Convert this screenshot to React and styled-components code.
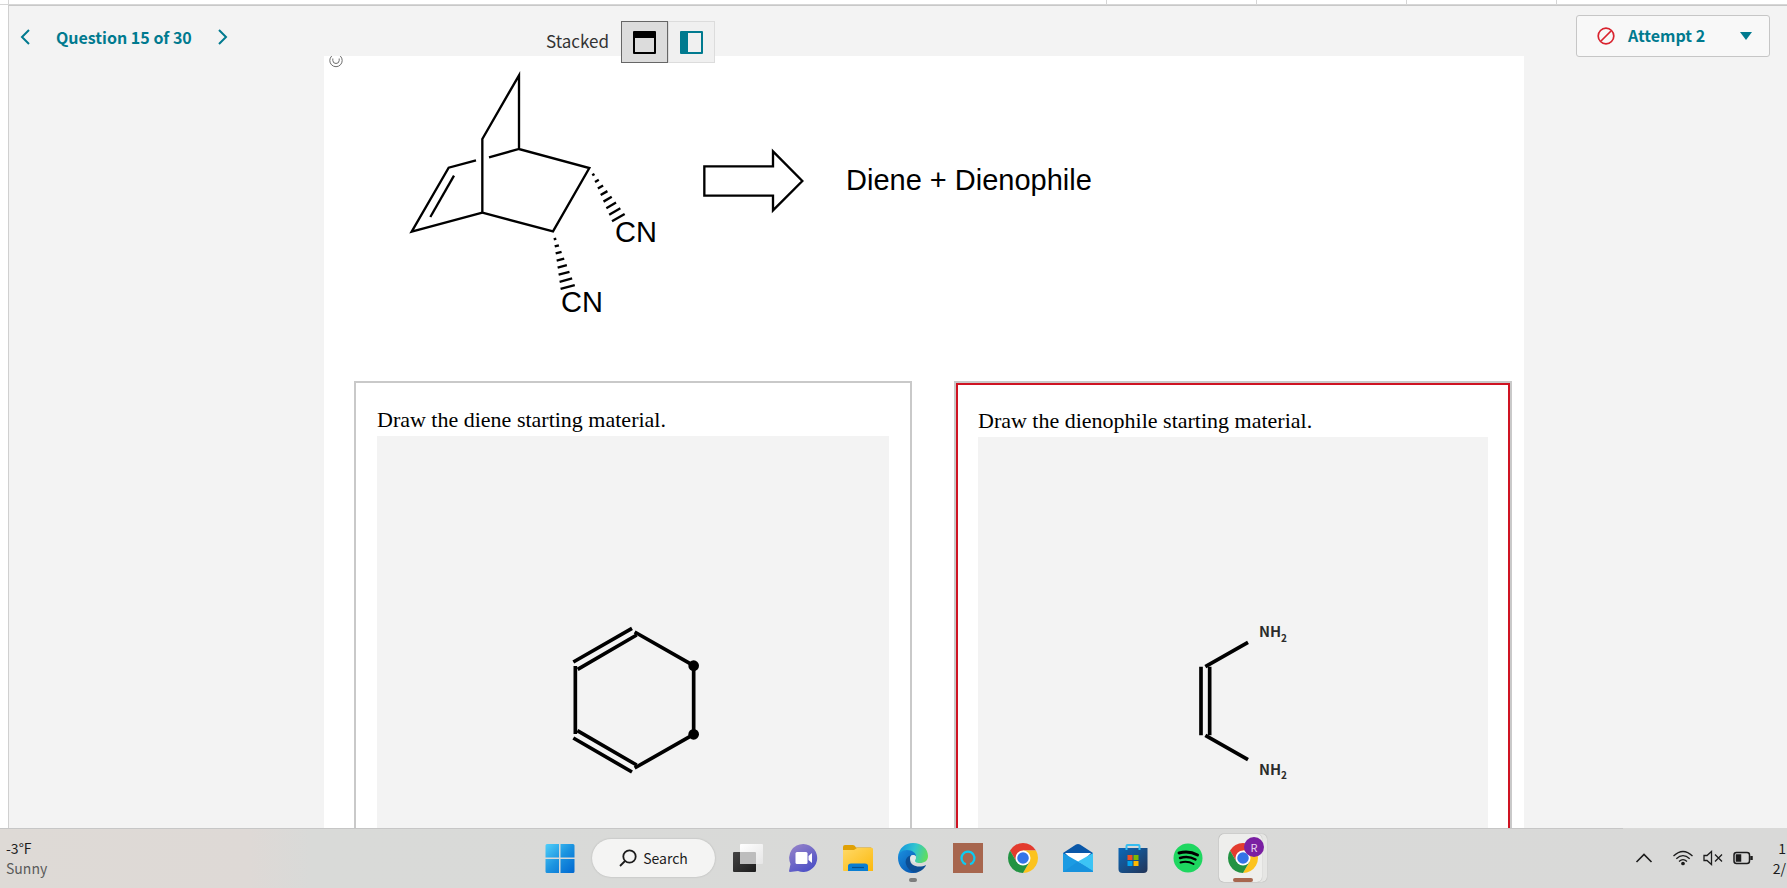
import React, { useState } from "react";
import styled, { createGlobalStyle } from "styled-components";

const teal = "#007a8f";
const sans = `"Noto Sans CJK SC", "Noto Sans", sans-serif`;

const GlobalStyle = createGlobalStyle`
  * {
    box-sizing: border-box;
  }
  body {
    margin: 0;
    background: white;
    font-family: ${sans};
  }
  button {
    font-family: inherit;
    margin: 0;
    padding: 0;
    border: 0;
    background: transparent;
    cursor: pointer;
  }
  svg {
    display: block;
    flex: none;
  }
  h1, h2, p {
    margin: 0;
    font-weight: 400;
  }
`;

//Short hash marks of a bond that points away from the viewer
const hashBond = (x1, y1, x2, y2, width) => {
  const count = 8;
  const length = Math.hypot(x2 - x1, y2 - y1);
  const nx = -(y2 - y1) / length;
  const ny = (x2 - x1) / length;
  return [...Array(count).keys()].map((i) => {
    const t = i / (count - 1);
    const half = 4 + t * (width / 2 - 4);
    const x = x1 + (x2 - x1) * t;
    const y = y1 + (y2 - y1) * t;
    return (
      <line
        key={i}
        x1={x - nx * half}
        y1={y - ny * half}
        x2={x + nx * half}
        y2={y + ny * half}
      />
    );
  });
};

const Bicycle = () => (
  <svg width="280" height="250" viewBox="240 60 840 750" role="img" aria-label="Bicyclic dinitrile">
    <g fill="none" stroke="black" strokeWidth="7">
      <path d="M597 297V76L487 267V488L699 544L808 354L597 297L507 322" />
      <path d="M468 331L386 353L275 545L487 488" />
      <path d="M402 377L331 501" />
      {hashBond(820, 374, 895, 503, 44)}
      {hashBond(705, 567, 743, 711, 44)}
    </g>
    <g fontFamily="Liberation Sans, sans-serif" fontSize="87">
      <text x="885" y="575">CN</text>
      <text x="723" y="787">CN</text>
    </g>
  </svg>
);

const RetroArrow = () => (
  <svg width="104" height="66" viewBox="1140 295 312 198">
    <path
      d="M1153 350H1359V305L1447 394L1359 482V438H1153Z"
      fill="white"
      stroke="black"
      strokeWidth="7"
    />
  </svg>
);

const DieneDrawing = () => (
  <svg width="160" height="160" viewBox="9 60 480 480" role="img" aria-label="Cyclohexadiene">
    <g stroke="black" strokeWidth="11" fill="none">
      <path d="M70 186L246 85M83 208L260 105" />
      <path d="M76 198V402" />
      <path d="M82 392L260 495M70 414L246 516" />
      <path d="M254 96L431 197V403L254 504" />
    </g>
    <circle cx="431" cy="197" r="16" />
    <circle cx="431" cy="403" r="16" />
  </svg>
);

const DienophileDrawing = () => (
  <svg width="160" height="160" viewBox="9 63 480 480" role="img" aria-label="Diaminoethene">
    <g stroke="black" strokeWidth="11" fill="none">
      <path d="M153 200V406M179 200V406" />
      <path d="M166 200L294 127M166 406L294 479" />
    </g>
    <g fontFamily={sans} fontWeight="700" fontSize="44" fill="#2b2b2b">
      <text x="327" y="112">
        NH<tspan dy="14" fontSize="30">2</tspan>
      </text>
      <text x="327" y="524">
        NH<tspan dy="14" fontSize="30">2</tspan>
      </text>
    </g>
  </svg>
);

const Chevron = ({ right }) => (
  <svg width="10" height="16" viewBox="0 0 10 16" fill="none" stroke={teal} strokeWidth="2">
    <path d={right ? "M1 1L8 8L1 15" : "M9 1L2 8L9 15"} />
  </svg>
);

const ChromeLogo = () => (
  <svg width="30" height="30" viewBox="2 2 44 44">
    <path fill="#e33b2e" d="M4.95 13A22 22 0 0 1 43.05 13H24V24L14.47 29.5Z" />
    <path fill="#fcc31e" d="M43.05 13A22 22 0 0 1 24 46L33.53 29.5L24 24V13Z" />
    <path fill="#229342" d="M24 46A22 22 0 0 1 4.95 13L14.47 29.5L24 24L33.53 29.5Z" />
    <circle cx="24" cy="24" r="11" fill="white" />
    <circle cx="24" cy="24" r="8.5" fill="#3474e8" />
  </svg>
);

const StartLogo = () => (
  <svg width="30" height="30" viewBox="0 0 30 30">
    <defs>
      <linearGradient id="start" x1="0" y1="0" x2="30" y2="30" gradientUnits="userSpaceOnUse">
        <stop offset="0" stopColor="#52d2fb" />
        <stop offset=".5" stopColor="#1c94e0" />
        <stop offset="1" stopColor="#0067d0" />
      </linearGradient>
    </defs>
    <path
      fill="url(#start)"
      d="M2 1H14V14.5H.5V2.500Q.5 1 2 1ZM15.500 1H28Q29.500 1 29.500 2.500V14.500H15.500ZM.5 16H14V30H2Q.5 30 .5 28.500ZM15.500 16H29.500V28.500Q29.500 30 28 30H15.500Z"
    />
  </svg>
);

const TaskViewLogo = () => (
  <svg width="30" height="30" viewBox="0 0 30 30">
    <defs>
      <linearGradient id="dark" x1="0" y1="0" x2="1" y2="1">
        <stop offset="0" stopColor="#444" />
        <stop offset="1" stopColor="#1c1c1c" />
      </linearGradient>
      <linearGradient id="light" x1="0" y1="0" x2="1" y2="1">
        <stop offset="0" stopColor="white" />
        <stop offset="1" stopColor="#e6e6e6" />
      </linearGradient>
    </defs>
    <rect x="0" y="9" width="23" height="20" rx="1" fill="url(#dark)" />
    <rect x="7" y="1" width="23" height="20" rx="1" fill="url(#light)" />
    <path d="M7 9H22Q23 9 23 10V21H8Q7 21 7 20Z" fill="#bdbdbd" />
  </svg>
);

const ChatLogo = () => (
  <svg width="30" height="30" viewBox="0 0 30 30">
    <defs>
      <linearGradient id="chat" x1="0" y1="0" x2=".6" y2="1">
        <stop offset="0" stopColor="#9a86c9" />
        <stop offset="1" stopColor="#4f52c6" />
      </linearGradient>
    </defs>
    <path fill="url(#chat)" d="M15.500 1A14 14 0 1 1 10 28L2 29Q1 29 1 28L2.500 21A14 14 0 0 1 15.500 1Z" />
    <rect x="7.500" y="9" width="12" height="12" rx="1.500" fill="white" />
    <path d="M20.500 13L24 10V20L20.500 17Z" fill="white" />
  </svg>
);

const FolderLogo = () => (
  <svg width="30" height="30" viewBox="0 0 30 30">
    <defs>
      <linearGradient id="folder" x1="0" y1="0" x2="1" y2="1">
        <stop offset="0" stopColor="#ffd967" />
        <stop offset="1" stopColor="#fcb90e" />
      </linearGradient>
    </defs>
    <path fill="#e0a106" d="M0 4Q0 2 2 2H10Q12 2 13 4.500H28Q29 4.500 29 6V12H0Z" />
    <path fill="url(#folder)" d="M0 7H11L14 5H29Q30 5 30 6V28H1Q0 28 0 27Z" />
    <path fill="#0a7ed2" d="M5 28V23Q5 20.500 8 20.500H22Q25 20.500 25 23V28Z" />
    <path stroke="#07508c" strokeWidth="1.200" d="M9 24.500H21" />
  </svg>
);

const EdgeLogo = () => (
  <svg width="30" height="30" viewBox="0 0 30 30">
    <defs>
      <linearGradient id="edgeTop" x1="0" y1=".5" x2="1" y2=".7">
        <stop offset="0" stopColor="#1497de" />
        <stop offset=".5" stopColor="#31c5cf" />
        <stop offset="1" stopColor="#63df55" />
      </linearGradient>
      <linearGradient id="edgeLeft" x1="0" y1="0" x2=".8" y2="1">
        <stop offset="0" stopColor="#1b8fdf" />
        <stop offset="1" stopColor="#0756b0" />
      </linearGradient>
    </defs>
    <path
      fill="url(#edgeTop)"
      d="M0 14C1 5 7 0 15 0C24 0 30 6 30 13C30 18 26 20 22 20C18 20 16 19 17 17C20 12 15 8 9 8C4 8 1 11 0 14Z"
    />
    <path
      fill="url(#edgeLeft)"
      d="M0 15C0 10 4 7 9 7C14 7 18 10 18 13C14 11 11 14 11 18C11 23 15 28 20 29C9 33 0 25 0 15Z"
    />
    <path
      fill="#0c4e94"
      d="M13 12C7 14 6 20 10 25C14 30 19 31 24 27C26 25.500 28 23 28 22C22 25 12 24 12 16C12 14 12.500 13 13 12Z"
    />
    <path fill="#e3e8ea" d="M13 12.500C16 11 18.500 13 17.800 15.500C16.500 17.500 17 19 18.500 20C14 20 11 16 13 12.500Z" />
  </svg>
);

const AlexaLogo = () => (
  <svg width="30" height="30" viewBox="0 0 30 30">
    <path fill="#a7664e" d="M0 0H30V30H0Z" />
    <path d="M13 21.300A6.500 6.500 0 1 1 17 21.300" fill="none" stroke="#0bcbf2" strokeWidth="2.200" />
  </svg>
);

const MailLogo = () => (
  <svg width="30" height="30" viewBox="0 0 30 30">
    <path fill="#0a57a8" d="M0 10L13 1.500Q15 .5 17 1.500L30 10V16H0Z" />
    <path fill="white" d="M2 10H28L18 20H12Z" />
    <path fill="#1b9be3" d="M0 10L30 27V29H0Z" />
    <path fill="#3cc4f5" d="M30 10V28L15 18.500Z" />
    <path fill="#1389d8" d="M30 28L15 18.500L0 29H29Z" opacity=".5" />
  </svg>
);

const StoreLogo = () => (
  <svg width="30" height="30" viewBox="0 0 30 30">
    <defs>
      <linearGradient id="store" x1="0" y1="0" x2="1" y2="1">
        <stop offset="0" stopColor="#0c69b9" />
        <stop offset="1" stopColor="#233457" />
      </linearGradient>
    </defs>
    <path fill="url(#store)" d="M.5 5H29.500V26Q29.500 30 25.500 30H4.500Q.5 30 .5 26Z" />
    <path d="M8.500 7V3Q8.500 2 9.500 2H20.500Q21.500 2 21.500 3V7" fill="none" stroke="#36bdf0" strokeWidth="2" />
    <path fill="#f25022" d="M9.500 12H14.500V17H9.500Z" />
    <path fill="#7fba00" d="M15.500 12H20.500V17H15.500Z" />
    <path fill="#00a4ef" d="M9.500 18H14.500V23H9.500Z" />
    <path fill="#ffb900" d="M15.500 18H20.500V23H15.500Z" />
  </svg>
);

const SpotifyLogo = () => (
  <svg width="30" height="30" viewBox="0 0 30 30">
    <circle cx="15" cy="15" r="14.500" fill="#1ed760" />
    <g fill="none" stroke="black" strokeLinecap="round">
      <path d="M6 10C12 8.500 19 9 24.500 12" strokeWidth="3" />
      <path d="M7 15C12 13.500 18 14 22.500 16.500" strokeWidth="2.500" />
      <path d="M7.500 19.500C12 18.300 16.500 18.700 20.500 21" strokeWidth="2" />
    </g>
  </svg>
);

const apps = [
  { name: "Task View", Logo: TaskViewLogo },
  { name: "Chat", Logo: ChatLogo },
  { name: "File Explorer", Logo: FolderLogo },
  { name: "Microsoft Edge", Logo: EdgeLogo, running: true },
  { name: "Amazon Alexa", Logo: AlexaLogo },
  { name: "Google Chrome", Logo: ChromeLogo },
  { name: "Mail", Logo: MailLogo },
  { name: "Microsoft Store", Logo: StoreLogo },
  { name: "Spotify", Logo: SpotifyLogo },
];

function Header() {
  const [view, setView] = useState("stacked");

  return (
    <HeaderBar>
      <QuestionNav>
        <button aria-label="Previous question">
          <Chevron />
        </button>
        <h1>Question 15 of 30</h1>
        <button aria-label="Next question">
          <Chevron right />
        </button>
      </QuestionNav>
      <ViewSwitch>
        <span>Stacked</span>
        <ViewButton
          aria-label="Stacked view"
          aria-pressed={view === "stacked"}
          $active={view === "stacked"}
          onClick={() => setView("stacked")}
        >
          <svg width="25" height="25" viewBox="0 0 25 25">
            <path fill="currentColor" fillRule="evenodd" d="M2 1H23Q24 1 24 2V23Q24 24 23 24H2Q1 24 1 23V2Q1 1 2 1ZM3 8V22H22V8Z" />
          </svg>
        </ViewButton>
        <ViewButton
          aria-label="Side by side view"
          aria-pressed={view === "side"}
          $active={view === "side"}
          onClick={() => setView("side")}
        >
          <svg width="25" height="25" viewBox="0 0 25 25">
            <path fill="currentColor" fillRule="evenodd" d="M2 1H23Q24 1 24 2V23Q24 24 23 24H2Q1 24 1 23V2Q1 1 2 1ZM9 3V22H22V3Z" />
          </svg>
        </ViewButton>
      </ViewSwitch>
      <AttemptButton aria-haspopup="listbox">
        <svg width="18" height="18" viewBox="0 0 18 18" fill="none" stroke="#d9232e" strokeWidth="1.700">
          <circle cx="9" cy="9" r="7.800" />
          <path d="M4 14L14 4" />
        </svg>
        <span>Attempt 2</span>
        <svg width="12" height="8" viewBox="0 0 12 8">
          <path d="M0 0H12L6 8Z" fill={teal} />
        </svg>
      </AttemptButton>
    </HeaderBar>
  );
}

function Taskbar() {
  return (
    <TaskbarWrap>
      <Weather>
        <span>-3°F</span>
        <small>Sunny</small>
      </Weather>
      <Apps>
        <AppButton aria-label="Start">
          <StartLogo />
        </AppButton>
        <SearchButton>
          <svg width="18" height="18" viewBox="0 0 18 18" fill="none" stroke="#1c1c1c" strokeWidth="1.800">
            <circle cx="10.500" cy="7.500" r="6.200" />
            <path d="M6 12L1 17" />
          </svg>
          Search
        </SearchButton>
        {apps.map(({ name, Logo, running }) => (
          <AppButton key={name} aria-label={name} $running={running}>
            <Logo />
          </AppButton>
        ))}
        <ActiveApp aria-label="Google Chrome, profile R">
          <span className="tile">
            <ChromeLogo />
          </span>
          <span className="badge">R</span>
        </ActiveApp>
      </Apps>
      <Tray>
        <button aria-label="Show hidden icons">
          <svg width="18" height="12" viewBox="0 0 18 12" fill="none" stroke="#1c1c1c" strokeWidth="1.600">
            <path d="M1.500 10L9 2.500L16.500 10" />
          </svg>
        </button>
        <TrayStatus aria-label="Network, volume and battery">
          <svg width="20" height="16" viewBox="0 0 20 16" fill="none" stroke="#1c1c1c" strokeWidth="1.300">
            <path d="M.5 6Q10 -3 19.500 6" />
            <path d="M3.300 8.800Q10 2.500 16.700 8.800" />
            <path d="M6 11.500Q10 7.800 14 11.500" />
            <circle cx="10" cy="13.500" r="1.200" fill="#1c1c1c" />
          </svg>
          <svg width="20" height="16" viewBox="0 0 20 16" fill="none" stroke="#1c1c1c" strokeWidth="1.300">
            <path d="M1 5.500H4L8.500 1.500V14.500L4 10.500H1Z" />
            <path d="M12 4.500L19 11.500M19 4.500L12 11.500" />
          </svg>
          <svg width="20" height="16" viewBox="0 0 20 16" fill="none" stroke="#1c1c1c" strokeWidth="1.500">
            <rect x="1" y="2.500" width="15.500" height="11" rx="2.500" />
            <rect x="3.500" y="5" width="4" height="6" fill="#1c1c1c" />
            <path d="M18.500 6V10" strokeWidth="2.500" />
          </svg>
        </TrayStatus>
        <Clock>
          <span>1</span>
          <span>2/</span>
        </Clock>
      </Tray>
    </TaskbarWrap>
  );
}

function App() {
  return (
    <Page>
      <GlobalStyle />
      <TopStrip>
        <span />
        <span />
        <span />
        <span />
        <span />
      </TopStrip>
      <Frame>
        <Header />
        <Content>
          <Credit>
            <svg width="14" height="14" viewBox="0 2 14 14" fill="none" stroke="#6d6d6d">
              <circle cx="7" cy="6.500" r="6.200" />
              <path d="M3.800 4.500V6.500Q4 9.500 7 9.500Q10 9.500 10.200 6.500V4.500" />
            </svg>
          </Credit>
          <Scheme>
            <Bicycle />
            <Products>
              <RetroArrow />
              <p>Diene + Dienophile</p>
            </Products>
          </Scheme>
          <Answers>
            <AnswerBox>
              <AnswerBody>
                <h2>Draw the diene starting material.</h2>
                <Canvas>
                  <DieneDrawing />
                </Canvas>
              </AnswerBody>
            </AnswerBox>
            <AnswerBox>
              <AnswerBody $wrong>
                <h2>Draw the dienophile starting material.</h2>
                <Canvas>
                  <DienophileDrawing />
                </Canvas>
              </AnswerBody>
            </AnswerBox>
          </Answers>
        </Content>
      </Frame>
      <Taskbar />
    </Page>
  );
}

const Page = styled.div`
  display: flex;
  flex-direction: column;
  height: 100vh;
  overflow: hidden;
`;

const TopStrip = styled.div`
  display: flex;
  flex: none;
  height: 5px;
  padding-left: 8px;
  border-bottom: 1px solid #d6d6d6;

  span {
    width: 150px;
    border-left: 1px solid #d6d6d6;
  }
  span:first-child {
    flex: 1;
  }
  span:last-child {
    width: 231px;
  }
`;

const Frame = styled.div`
  display: flex;
  flex-direction: column;
  flex: 1;
  min-height: 0;
  overflow: hidden;
  margin-left: 8px;
  background: #f3f3f3;
  border-top: 1px solid #c8c8c8;
  border-left: 1px solid #d0d0d0;
`;

const HeaderBar = styled.header`
  display: grid;
  grid-template-columns: 537px auto 1fr;
  align-items: start;
  flex: none;
  height: 50px;
  position: relative;
  z-index: 1;
`;

const QuestionNav = styled.nav`
  display: flex;
  align-items: center;
  gap: 26px;
  height: 62px;
  padding-left: 11px;
  color: ${teal};

  h1 {
    font-size: 16px;
    font-weight: 700;
    line-height: 24px;
  }
`;

const ViewSwitch = styled.div`
  display: flex;
  align-items: center;
  margin-top: 15px;
  color: #333;
  font-size: 17px;
  line-height: 24px;

  span {
    margin-right: 12px;
    padding-bottom: 2px;
  }
`;

const ViewButton = styled.button`
  display: grid;
  place-items: center;
  width: 47px;
  height: 42px;
  color: ${({ $active }) => ($active ? "black" : teal)};
  background: ${({ $active }) => ($active ? "#dcdcdc" : "#f0f0f0")};
  border: 1px solid ${({ $active }) => ($active ? "#666" : "#dcdcdc")};
`;

const AttemptButton = styled.button`
  display: flex;
  align-items: center;
  justify-self: end;
  gap: 13px;
  width: 194px;
  height: 42px;
  margin: 9px 17px 0 0;
  padding: 0 17px 0 20px;
  color: ${teal};
  background: #f8f8f8;
  border: 1px solid #c6c6c6;
  border-radius: 3px;
  font-size: 16px;
  font-weight: 700;
  line-height: 24px;

  span {
    flex: 1;
    padding-bottom: 2px;
    text-align: left;
  }
`;

const Content = styled.main`
  flex: none;
  margin: 0 263px 0 315px;
  padding: 0 12px 0 30px;
  background: white;
`;

const Credit = styled.div`
  height: 14px;
  margin-left: -25px;
`;

const Scheme = styled.section`
  display: flex;
  gap: 20px;
  margin: 0 0 61px 46px;
`;

const Products = styled.div`
  display: flex;
  align-items: center;
  gap: 42px;
  height: 222px;

  p {
    padding-bottom: 2px;
    font-family: "Liberation Sans", sans-serif;
    font-size: 29px;
    line-height: 32px;
    white-space: nowrap;
  }
`;

const Answers = styled.section`
  display: grid;
  grid-template-columns: 1fr 1fr;
  gap: 42px;
`;

const AnswerBox = styled.article`
  border: 2px solid #c9c9c9;
`;

const AnswerBody = styled.div`
  padding: ${({ $wrong }) => ($wrong ? "20px" : "21px")};
  border: ${({ $wrong }) => ($wrong ? "2px solid #cf1322" : "0")};

  h2 {
    font-family: "Liberation Serif", serif;
    font-size: 22px;
    line-height: 32px;
  }
`;

const Canvas = styled.div`
  display: grid;
  place-items: center;
  height: 528px;
  background: #f3f3f3;
`;

const TaskbarWrap = styled.footer`
  display: grid;
  grid-template-columns: 532px auto 1fr;
  flex: none;
  height: 60px;
  overflow: hidden;
  color: #1c1c1c;
  background: linear-gradient(#c6c6c6, #c6c6c6) 0 0 / calc(100% - 164px) 1px
      no-repeat,
    linear-gradient(90deg, #dedad6, #ded9d6 250px, #d9dad8 310px, #d9d9d8);
`;

const Weather = styled.div`
  display: flex;
  flex-direction: column;
  justify-content: center;
  padding-left: 6px;
  font-size: 14px;
  line-height: 20px;

  small {
    color: #5a5a5a;
    font-size: 14px;
  }
`;

const Apps = styled.div`
  display: flex;
  align-items: center;
`;

const AppButton = styled.button`
  display: grid;
  place-items: center;
  position: relative;
  width: 55px;
  height: 60px;

  &::after {
    content: "";
    display: ${({ $running }) => ($running ? "block" : "none")};
    position: absolute;
    bottom: 6px;
    width: 8px;
    height: 4px;
    border-radius: 2px;
    background: #7d7d7d;
  }
`;

const SearchButton = styled.button`
  display: flex;
  align-items: center;
  justify-content: center;
  gap: 6px;
  width: 123px;
  height: 38px;
  margin: 0 5px;
  border-radius: 19px;
  background: #f4f4f3;
  box-shadow: 0 0 2px rgba(0, 0, 0, 0.2);
  color: #1c1c1c;
  font-size: 14px;
  line-height: 20px;
`;

const ActiveApp = styled.button`
  position: relative;
  width: 48px;
  height: 48px;
  margin: 0 4px;
  border-radius: 5px;
  background: #e6e6e4;
  box-shadow: 0 0 1px rgba(0, 0, 0, 0.3);

  .tile {
    display: grid;
    place-items: center end;
    width: 43px;
    height: 48px;
    padding-right: 4px;
    border-radius: 5px;
    background: #eeeeec;
    box-shadow: 0 0 1px rgba(0, 0, 0, 0.3);
  }
  .badge {
    position: absolute;
    top: 3px;
    right: 3px;
    width: 20px;
    height: 20px;
    border-radius: 50%;
    background: #7a1fa2;
    color: #e8d5f0;
    font-size: 11px;
    line-height: 20px;
    text-align: center;
  }
  &::after {
    content: "";
    position: absolute;
    left: 14px;
    bottom: 0;
    width: 20px;
    height: 4px;
    border-radius: 2px;
    background: #a7664e;
  }
`;

const Tray = styled.div`
  display: flex;
  align-items: center;
  justify-content: flex-end;
  gap: 20px;
  padding-right: 1px;
`;

const TrayStatus = styled.button`
  display: flex;
  gap: 10px;
`;

const Clock = styled.div`
  display: flex;
  flex-direction: column;
  align-items: flex-end;
  font-size: 14px;
  line-height: 20px;
`;

export default App;
